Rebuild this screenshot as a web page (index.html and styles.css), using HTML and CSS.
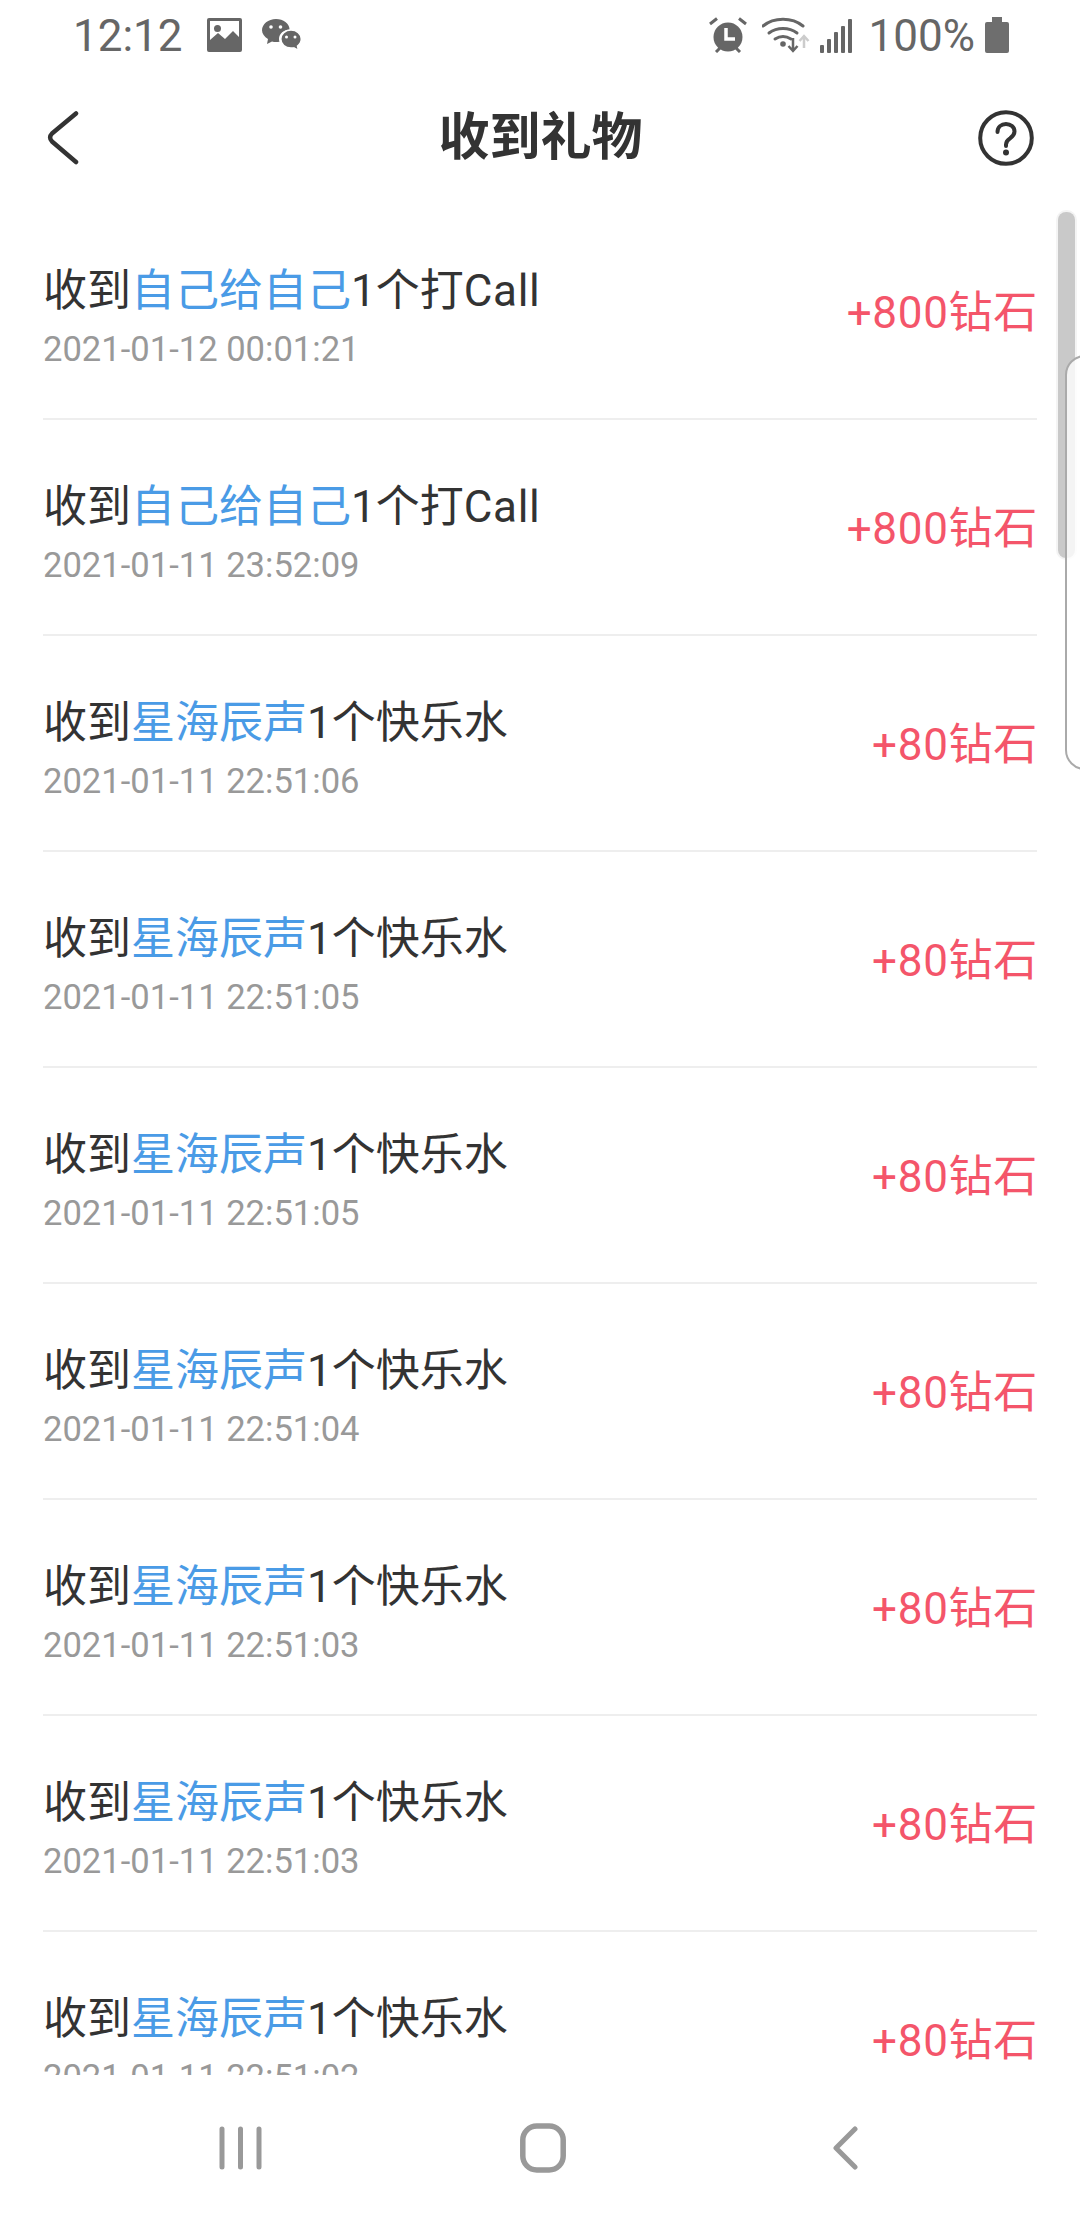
FILE: index.html
```html
<!DOCTYPE html>
<html lang="zh-CN">
<head>
    <meta charset="UTF-8">
    <meta name="viewport" content="width=device-width, initial-scale=1.0">
    <title>收到礼物</title>
    <link rel="stylesheet" href="styles.css">
</head>
<body>
    <div class="phone">
        <!-- 状态栏 -->
        <div class="status-bar">
            <div class="status-left">
                <span class="clock">12:12</span>
                <svg class="ico-image" viewBox="0 0 35 34"><path fill="#666" fill-rule="evenodd" d="M2 0h31a2 2 0 0 1 2 2v30a2 2 0 0 1-2 2H2a2 2 0 0 1-2-2V2a2 2 0 0 1 2-2zM3 3v19l8-7 7 6 8-8 6 6V3zM10.500 7a3.500 3.500 0 1 1 0 7 3.500 3.500 0 0 1 0-7z"/></svg>
                <svg class="ico-wechat" viewBox="0 0 40 34"><path fill="#666" d="M14 0c7.400 0 13.300 4.600 13.600 10.500-5.700.2-10.600 4.200-10.600 9.500 0 1 .2 1.900.5 2.700-1.100.3-2.300.4-3.500.4-1.400 0-2.700-.2-4-.6L5 25l1-5C2.400 17.800 0 14.700 0 11.300 0 5 6.300 0 14 0z"/><path fill="#666" stroke="#fff" stroke-width="1.500" d="M29 11c5.700 0 10.300 3.900 10.300 9 0 2.900-1.500 5.300-3.800 7l1 4.500-4.700-2.600c-.9.200-1.800.2-2.800.2-5.700 0-10.200-4-10.200-9.100 0-5 4.500-9 10.200-9z"/><circle cx="9" cy="8" r="1.800" fill="#fff"/><circle cx="18.500" cy="8" r="1.800" fill="#fff"/><circle cx="24.500" cy="18" r="1.500" fill="#fff"/><circle cx="33" cy="18" r="1.500" fill="#fff"/></svg>
            </div>
            <div class="status-right">
                <svg class="ico-alarm" viewBox="0 0 38 36"><path fill="none" stroke="#666" stroke-width="3" d="M1 7l7-5.500M37 7l-7-5.500M7 35l4-4M31 35l-4-4"/><circle cx="19" cy="20" r="14.500" fill="#666"/><path fill="none" stroke="#fff" stroke-width="3.500" d="M17 11v11h9"/></svg>
                <svg class="ico-wifi" viewBox="0 0 50 36"><g fill="none" stroke="#666" stroke-width="3" stroke-linecap="round"><path d="M1 9c11-9 29-9 40 0"/><path d="M7 16c8-6 20-6 28 0"/><path d="M13 22c5-3 11-3 16 0"/></g><circle cx="21" cy="27" r="2.800" fill="#666"/><path fill="none" stroke="#666" stroke-width="2.500" d="M31 21v13M26.500 29l4.500 5 4.500-5"/><path fill="none" stroke="#ccc" stroke-width="2.500" d="M42 31V19M37.500 24l4.500-5 4.500 5"/></svg>
                <svg class="ico-signal" viewBox="0 0 32 34"><rect x="0" y="26" width="4" height="8" rx="1" fill="#666"/><rect x="7" y="20" width="4" height="14" rx="1" fill="#666"/><rect x="14" y="13" width="4" height="21" rx="1" fill="#666"/><rect x="21" y="7" width="4" height="27" rx="1" fill="#666"/><rect x="28" y="0" width="4" height="34" rx="1" fill="#666"/></svg>
                <span class="percent">100%</span>
                <svg class="ico-battery" viewBox="0 0 24 36"><path fill="#6e6e6e" d="M7 0h10v5h5a2 2 0 0 1 2 2v27a2 2 0 0 1-2 2H2a2 2 0 0 1-2-2V7a2 2 0 0 1 2-2h5z"/></svg>
            </div>
        </div>

        <!-- 标题栏 -->
        <div class="title-bar">
            <svg class="ico-back" viewBox="0 0 32 54"><path fill="none" stroke="#333" stroke-width="4.500" stroke-linecap="round" stroke-linejoin="round" d="M29 2.500L5 22.500c-2.500 2.500-2.500 5.500 0 8L29 51"/></svg>
            <h1 class="page-title">收到礼物</h1>
            <svg class="ico-help" viewBox="0 0 56 56"><circle cx="28" cy="28" r="25.800" fill="none" stroke="#333" stroke-width="4"/><path fill="none" stroke="#333" stroke-width="4" stroke-linecap="round" d="M19.500 22c0-5 3.800-8 8.500-8s8.500 3 8.500 7.500c0 3.500-2 5-4.500 6.800-2.500 1.700-4 3-4 6.200v1.500"/><circle cx="28" cy="42.500" r="3" fill="#333"/></svg>
        </div>

        <!-- 列表 -->
        <ul class="gift-list">
            <li class="gift-item">
                <div class="gift-info"><p class="gift-name">收到<span class="from">自己给自己</span>1个打<span class="latin">Call</span></p><p class="gift-time">2021-01-12 00:01:21</p></div>
                <span class="gift-amount">+800钻石</span>
            </li>
            <li class="gift-item">
                <div class="gift-info"><p class="gift-name">收到<span class="from">自己给自己</span>1个打<span class="latin">Call</span></p><p class="gift-time">2021-01-11 23:52:09</p></div>
                <span class="gift-amount">+800钻石</span>
            </li>
            <li class="gift-item">
                <div class="gift-info"><p class="gift-name">收到<span class="from">星海辰声</span>1个快乐水</p><p class="gift-time">2021-01-11 22:51:06</p></div>
                <span class="gift-amount">+80钻石</span>
            </li>
            <li class="gift-item">
                <div class="gift-info"><p class="gift-name">收到<span class="from">星海辰声</span>1个快乐水</p><p class="gift-time">2021-01-11 22:51:05</p></div>
                <span class="gift-amount">+80钻石</span>
            </li>
            <li class="gift-item">
                <div class="gift-info"><p class="gift-name">收到<span class="from">星海辰声</span>1个快乐水</p><p class="gift-time">2021-01-11 22:51:05</p></div>
                <span class="gift-amount">+80钻石</span>
            </li>
            <li class="gift-item">
                <div class="gift-info"><p class="gift-name">收到<span class="from">星海辰声</span>1个快乐水</p><p class="gift-time">2021-01-11 22:51:04</p></div>
                <span class="gift-amount">+80钻石</span>
            </li>
            <li class="gift-item">
                <div class="gift-info"><p class="gift-name">收到<span class="from">星海辰声</span>1个快乐水</p><p class="gift-time">2021-01-11 22:51:03</p></div>
                <span class="gift-amount">+80钻石</span>
            </li>
            <li class="gift-item">
                <div class="gift-info"><p class="gift-name">收到<span class="from">星海辰声</span>1个快乐水</p><p class="gift-time">2021-01-11 22:51:03</p></div>
                <span class="gift-amount">+80钻石</span>
            </li>
            <li class="gift-item">
                <div class="gift-info"><p class="gift-name">收到<span class="from">星海辰声</span>1个快乐水</p><p class="gift-time">2021-01-11 22:51:02</p></div>
                <span class="gift-amount">+80钻石</span>
            </li>
        </ul>

        <!-- 底部导航 -->
        <div class="nav-bar">
            <svg class="ico-recent" viewBox="0 0 43 44"><path fill="none" stroke="#999" stroke-width="5" stroke-linecap="round" d="M3 3v38M21.500 3v38M40 3v38"/></svg>
            <svg class="ico-home" viewBox="0 0 46 50"><rect x="2.800" y="3" width="40.400" height="44" rx="14" fill="none" stroke="#999" stroke-width="5.500"/></svg>
            <svg class="ico-nav-back" viewBox="0 0 25 44"><path fill="none" stroke="#999" stroke-width="5" stroke-linecap="round" stroke-linejoin="round" d="M22 3L3 22l19 19"/></svg>
        </div>

        <!-- 覆盖层：滚动条在下，边缘面板在上 -->
        <div class="scrollbar"></div>
        <div class="edge-handle"></div>
    </div>
</body>
</html>
```

FILE: styles.css
```css
*{
    box-sizing: border-box;
}

html, body{
    margin: 0;
    padding: 0;
    background: #fff;
}

.phone{
    width: 1080px;
    height: 2220px;
    position: relative;
    overflow: hidden;
    background: #fff;
    display: flex;
    flex-direction: column;
    font-family: Roboto, "Noto Sans CJK SC", sans-serif;
}

/* 状态栏 */
.status-bar{
    height: 70px;
    padding: 17px 71px 0 73px;
    display: flex;
    justify-content: space-between;
    align-items: flex-start;
    color: #666;
}
.status-left, .status-right{
    display: flex;
    align-items: flex-start;
}
.clock, .percent{
    font-size: 44px;
    line-height: 38px;
    font-weight: 400;
}
.ico-image{
    width: 35px;
    height: 34px;
    margin: 1px 0 0 24px;
}
.ico-wechat{
    width: 40px;
    height: 34px;
    margin: 2px 0 0 20px;
}
.ico-alarm{
    width: 38px;
    height: 36px;
}
.ico-wifi{
    width: 50px;
    height: 36px;
    margin-left: 15px;
}
.ico-signal{
    width: 32px;
    height: 34px;
    margin: 2px 0 0 8px;
}
.percent{
    margin-left: 17px;
}
.ico-battery{
    width: 24px;
    height: 36px;
    margin-left: 10px;
}

/* 标题栏 */
.title-bar{
    height: 134px;
    padding: 1px 46px 0 47px;
    display: grid;
    grid-template-columns: 1fr auto 1fr;
    align-items: center;
    color: #333;
}
.ico-back{
    width: 32px;
    height: 54px;
}
.page-title{
    margin: 0;
    font-size: 51px;
    font-weight: 700;
    line-height: 60px;
}
.ico-help{
    width: 56px;
    height: 56px;
    justify-self: end;
}

/* 列表 */
.gift-list{
    margin: 0;
    padding: 0 43px;
    list-style: none;
    height: 1871px;
    overflow: hidden;
}
.gift-item{
    height: 216px;
    border-bottom: 2px solid #eee;
    display: flex;
    justify-content: space-between;
    align-items: center;
}
.gift-info{
    padding-top: 10px;
}
.gift-name{
    margin: 0;
    font-size: 44px;
    line-height: 56px;
    color: #333;
}
.latin{
    letter-spacing: 0.7px;
}
.from{
    color: #4a9be6;
}
.gift-time{
    margin: 10px 0 0 0;
    font-size: 34.600px;
    line-height: 40px;
    color: #999;
}
.gift-amount{
    padding-top: 3px;
    margin-right: -1px;
    font-size: 44px;
    line-height: 56px;
    letter-spacing: 0.7px;
    color: #f4556a;
}

/* 底部导航 */
.nav-bar{
    height: 145px;
    padding-left: 219px;
    display: flex;
    align-items: center;
    background: #fff;
}
.ico-recent{
    width: 43px;
    height: 44px;
}
.ico-home{
    width: 46px;
    height: 50px;
    margin-left: 258px;
}
.ico-nav-back{
    width: 25px;
    height: 44px;
    margin-left: 267px;
}

/* 覆盖层 */
.scrollbar{
    position: absolute;
    left: 1058px;
    top: 212px;
    width: 17px;
    height: 346px;
    border-radius: 8px;
    background: #c9c9c9;
    box-shadow: 0 0 0 2px #f4f4f4;
}
.edge-handle{
    position: absolute;
    left: 1065px;
    top: 355px;
    width: 30px;
    height: 415px;
    background: rgba(255,255,255,0.8);
    border: 2px solid #aaa;
    border-radius: 20px 0 0 20px;
}
```
